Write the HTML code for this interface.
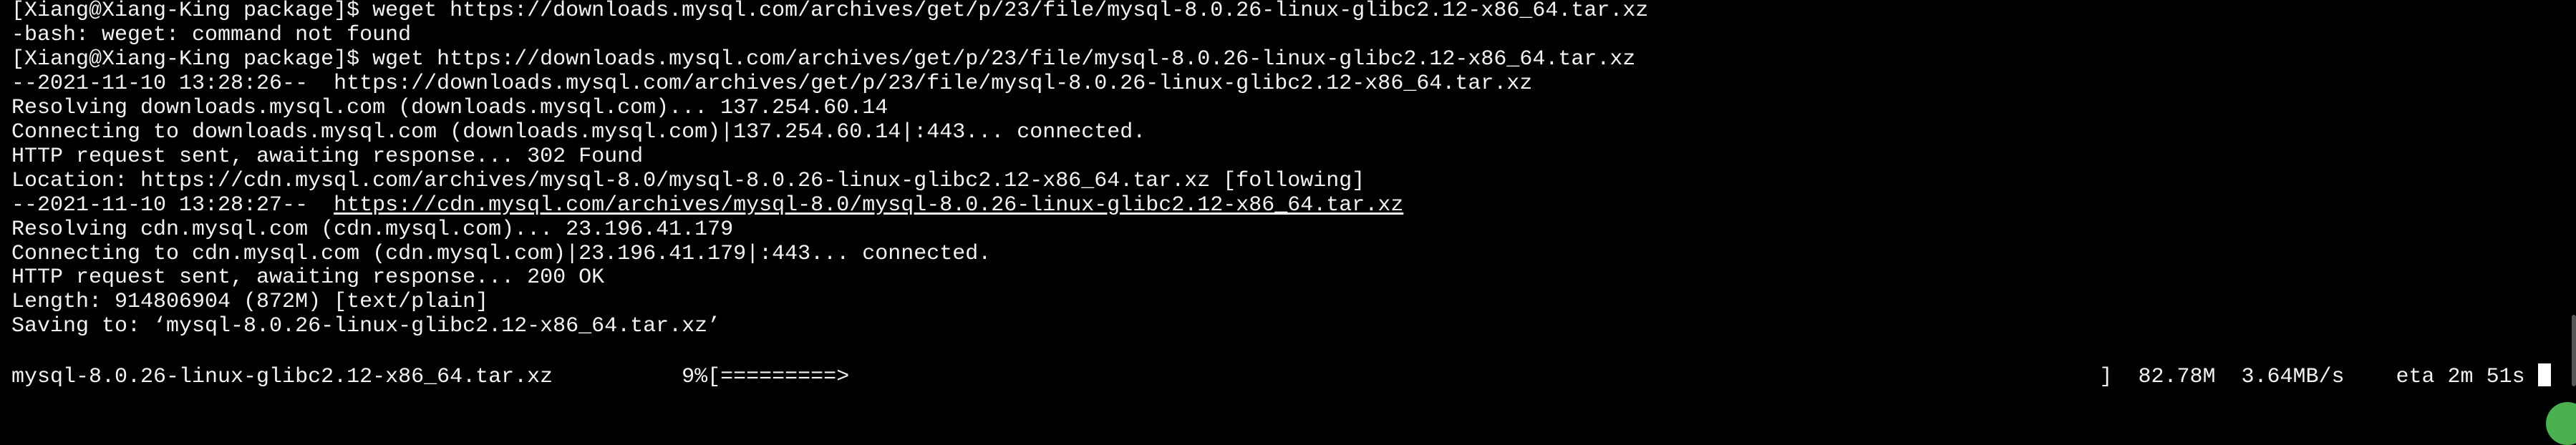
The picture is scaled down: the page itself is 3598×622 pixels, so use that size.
<!DOCTYPE html>
<html><head><meta charset="utf-8"><style>
html,body{margin:0;padding:0;background:#000;width:3598px;height:570px;overflow:hidden}
pre{position:absolute;left:16px;top:-1px;margin:0;font-family:"Liberation Mono",monospace;font-size:30px;line-height:33.95px;color:#f2f2f2;white-space:pre}
u{text-decoration:underline;text-underline-offset:3px}
.cur{display:inline-block;width:18px;height:32px;background:#fff;vertical-align:-6px}
.g{position:absolute;left:3556px;top:562px;width:60px;height:60px;border-radius:50%;background:#4caf50}
.sb{position:absolute;left:3592px;top:440px;width:6px;height:100px;background:#555;border-radius:3px}
</style></head><body>
<pre>[Xiang@Xiang-King package]$ weget https://downloads.mysql.com/archives/get/p/23/file/mysql-8.0.26-linux-glibc2.12-x86_64.tar.xz
-bash: weget: command not found
[Xiang@Xiang-King package]$ wget https://downloads.mysql.com/archives/get/p/23/file/mysql-8.0.26-linux-glibc2.12-x86_64.tar.xz
--2021-11-10 13:28:26--  https://downloads.mysql.com/archives/get/p/23/file/mysql-8.0.26-linux-glibc2.12-x86_64.tar.xz
Resolving downloads.mysql.com (downloads.mysql.com)... 137.254.60.14
Connecting to downloads.mysql.com (downloads.mysql.com)|137.254.60.14|:443... connected.
HTTP request sent, awaiting response... 302 Found
Location: https://cdn.mysql.com/archives/mysql-8.0/mysql-8.0.26-linux-glibc2.12-x86_64.tar.xz [following]
--2021-11-10 13:28:27--  <u>https://cdn.mysql.com/archives/mysql-8.0/mysql-8.0.26-linux-glibc2.12-x86_64.tar.xz</u>
Resolving cdn.mysql.com (cdn.mysql.com)... 23.196.41.179
Connecting to cdn.mysql.com (cdn.mysql.com)|23.196.41.179|:443... connected.
HTTP request sent, awaiting response... 200 OK
Length: 914806904 (872M) [text/plain]
Saving to: ‘mysql-8.0.26-linux-glibc2.12-x86_64.tar.xz’

mysql-8.0.26-linux-glibc2.12-x86_64.tar.xz          9%[=========>                                                                                                 ]  82.78M  3.64MB/s    eta 2m 51s <span class="cur"></span></pre>
<div class="sb"></div>
<div class="g"></div>
</body></html>
